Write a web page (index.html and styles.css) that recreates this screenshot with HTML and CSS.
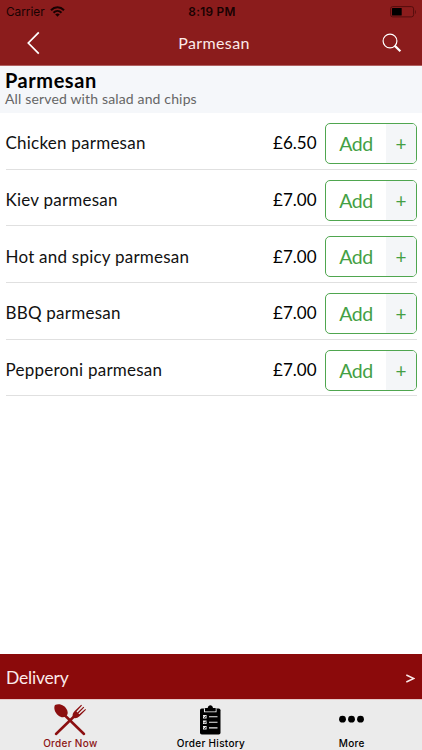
FILE: index.html
```html
<!DOCTYPE html>
<html lang="en">
<head>
<meta charset="utf-8">
<title>Parmesan</title>
<link rel="stylesheet" href="styles.css">
</head>
<body>
<div class="app">
  <header class="top">
    <div class="status">
      <div class="carrier"><span class="carrier-name">Carrier</span>
        <svg class="wifi" width="15" height="11" viewBox="0 0 15 11"><g fill="none" stroke="#180202" stroke-width="2"><path d="M1 4.2C4.700 .4 10.300 .4 14 4.200"/><path d="M3.500 6.700c2.300-2.200 5.700-2.200 8 0"/></g><path d="M5.200 8.300c1.300-1.200 3.300-1.200 4.600 0L7.500 10.700z" fill="#180202"/></svg>
      </div>
      <span class="clock">8:19 PM</span>
      <svg class="battery" width="27" height="12" viewBox="0 0 27 12"><rect x=".6" y=".6" width="23" height="10.300" rx="2.200" fill="none" stroke="#550d0d"/><rect x="2" y="2" width="9.700" height="7.500" rx=".5" fill="#000"/><path d="M25 4v4c1.200-.5 1.200-3.500 0-4z" fill="#550d0d"/></svg>
    </div>
    <div class="nav">
      <svg class="back" width="14" height="24" viewBox="0 0 14 24"><path d="M12.800 1.300L2.300 12l10.500 10.700" fill="none" stroke="#fff" stroke-width="1.700"/></svg>
      <h1 class="title">Parmesan</h1>
      <svg class="search" width="20" height="20" viewBox="0 0 20 20"><circle cx="8" cy="8" r="6.900" fill="none" stroke="#fff" stroke-width="1.200"/><path d="M12.600 12.600l5.800 5.600" stroke="#fff" stroke-width="2.200"/></svg>
    </div>
  </header>
  <section class="category">
    <h2 class="category-name">Parmesan</h2>
    <p class="category-note">All served with salad and chips</p>
  </section>
  <main class="menu">
    <div class="item"><span class="name">Chicken parmesan</span><span class="price">£6.50</span><button class="add"><span class="label">Add</span><span class="plus">+</span></button></div>
    <div class="item"><span class="name">Kiev parmesan</span><span class="price">£7.00</span><button class="add"><span class="label">Add</span><span class="plus">+</span></button></div>
    <div class="item"><span class="name">Hot and spicy parmesan</span><span class="price">£7.00</span><button class="add"><span class="label">Add</span><span class="plus">+</span></button></div>
    <div class="item"><span class="name">BBQ parmesan</span><span class="price">£7.00</span><button class="add"><span class="label">Add</span><span class="plus">+</span></button></div>
    <div class="item"><span class="name">Pepperoni parmesan</span><span class="price">£7.00</span><button class="add"><span class="label">Add</span><span class="plus">+</span></button></div>
  </main>
  <div class="delivery"><span class="delivery-name">Delivery</span><svg class="arrow" width="9" height="9" viewBox="0 0 9 9"><path d="M.3 1L7.800 4.500.3 8" fill="none" stroke="#fbeaea" stroke-width="1.500"/></svg></div>
  <nav class="tabs">
    <div class="tab active">
      <svg class="tab-icon" width="34" height="34" viewBox="0 0 34 34"><g transform="translate(0 1)"><g fill="#8b0f10"><path d="M2 2C6-.2 12.500 2 14.300 7.500c.9 2.700.3 4.600-1.500 6-2.300 1.400-5.200 1-7.500-1C1.500 9.300.5 4.500 2 2z"/><path d="M20 14.800c-1-2.800-.2-5 1.700-6.800l6.500-6.200.8.700-5.500 6.100.9.800 6-5.700.8.800-5.800 5.900.9.800 6-5.300.7.800-6.500 6.600c-2 1.900-4.500 2.500-6.500 1.500z"/></g><path d="M12 12.500l19 18.500M20.500 14L3 31" fill="none" stroke="#8b0f10" stroke-width="2.500" stroke-linecap="round"/></g></svg>
      <span class="tab-label">Order Now</span>
    </div>
    <div class="tab">
      <svg class="tab-icon" width="34" height="34" viewBox="0 0 34 34"><rect x="6" y="6.500" width="20.500" height="26" rx="1.800"/><path d="M10.500 6.500v3.200H22V6.500" fill="none" stroke="#ebebeb" stroke-width="1.100"/><path d="M11.100 9.200V6h2.600c.5-3.700 4.800-3.700 5.300 0h2.500v3.200z"/><g fill="#ebebeb"><path d="M9 13h3.600v3.600H9zM9 18.500h3.600v3.600H9zM9 24h3.600v3.600H9z"/></g><g fill="none" stroke="#000" stroke-width=".8"><path d="M9.800 14.700l1 1 1.200-1.700M9.800 20.200l1 1 1.200-1.700M9.800 25.700l1 1 1.200-1.700"/></g><path d="M15 14.700h8.500M15 20.300h8.500M15 25.900h8.500" stroke="#ebebeb" stroke-width="1.100"/></svg>
      <span class="tab-label">Order History</span>
    </div>
    <div class="tab">
      <svg class="tab-icon" width="34" height="34" viewBox="0 0 34 34"><circle cx="7.500" cy="17.200" r="3.400"/><circle cx="16.500" cy="17.200" r="3.400"/><circle cx="25.500" cy="17.200" r="3.400"/></svg>
      <span class="tab-label">More</span>
    </div>
  </nav>
</div>
</body>
</html>
```
FILE: styles.css
```css
* { box-sizing: border-box; }
body { margin: 0; background: #fff; font-family: Lato, sans-serif; color: #111; }
h1, h2, p { margin: 0; font-weight: 400; }
svg { display: block; flex: none; }
.app { width: 422px; height: 750px; display: flex; flex-direction: column; overflow: hidden; white-space: nowrap; }
.top { height: 66px; background: #8b1c1c; border-bottom: 1px solid #b06060; }
.status { height: 21px; display: grid; grid-template-columns: 1fr auto 1fr; align-items: center; padding: 0 5px 0 6px; font: 11.800px/21px Inter, sans-serif; color: #180202; }
.carrier { display: flex; align-items: center; gap: 5px; }
.carrier-name, .clock { padding-top: 1px; line-height: 22px; }
.clock { font-weight: 600; letter-spacing: .3px; padding-left: 1px; }
.battery { justify-self: end; }
.nav { height: 43px; display: grid; grid-template-columns: 1fr auto 1fr; align-items: center; padding: 0 20px 0 26px; }
.title { color: #fbe9e9; font-size: 16px; letter-spacing: .4px; margin-right: 0; }
.search { justify-self: end; }
.category { height: 47px; background: #f5f7fa; padding: 3px 5px 0; }
.category-name { font-size: 20px; line-height: 23px; font-weight: 700; color: #000; letter-spacing: .55px; }
.category-note { font-size: 14px; line-height: 14px; color: #666; letter-spacing: .15px; }
.menu { flex: 1; padding: 0 5px 0 6px; }
.item { height: 56.700px; display: flex; align-items: center; padding-top: 5px; border-bottom: 1px solid #e0e0e0; font-size: 17px; }
.name { flex: 1; letter-spacing: .23px; margin-left: -.5px; padding-bottom: 1px; }
.price { margin-right: 8.500px; color: #000; letter-spacing: 0; padding-bottom: 1px; }
.add { width: 92px; height: 41px; padding: 0; display: flex; border: 1px solid #4fa64f; border-radius: 5px; overflow: hidden; background: #fff; color: #44a044; font: 19.500px/39px Lato, sans-serif; }
.label { width: 60px; letter-spacing: -.5px; }
.plus { flex: 1; background: #f4f6f8; line-height: 40px; font-size: 19px; }
.delivery { height: 45px; display: flex; align-items: center; justify-content: space-between; padding: 0 7px 0 6px; background: #8b0a0b; color: #fbeaea; font-size: 17.500px; }
.delivery-name { letter-spacing: -.2px; padding-top: 1px; }
.arrow { margin-top: 4px; }
.tabs { height: 51px; display: grid; grid-template-columns: repeat(3, 1fr); background: #ebebeb; border-top: 1px solid #e6c8c8; }
.tab { display: flex; flex-direction: column; align-items: center; padding-top: 2px; color: #000; font: 500 10px/12px Inter, sans-serif; letter-spacing: .3px; }
.tab-label { margin-top: 1px; }
.active { color: #8b1414; }
```
